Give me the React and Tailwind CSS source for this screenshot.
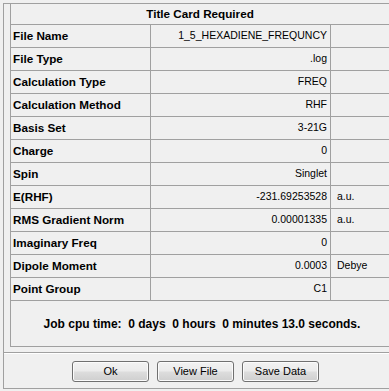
const rows = [
  ["File Name", "1_5_HEXADIENE_FREQUNCY", ""],
  ["File Type", ".log", ""],
  ["Calculation Type", "FREQ", ""],
  ["Calculation Method", "RHF", ""],
  ["Basis Set", "3-21G", ""],
  ["Charge", "0", ""],
  ["Spin", "Singlet", ""],
  ["E(RHF)", "-231.69253528", "a.u."],
  ["RMS Gradient Norm", "0.00001335", "a.u."],
  ["Imaginary Freq", "0", ""],
  ["Dipole Moment", "0.0003", "Debye"],
  ["Point Group", "C1", ""],
];

function Btn({ children }) {
  return (
    <div className="w-[77px] h-[21px] border border-[#707070] rounded-[3px] bg-[linear-gradient(to_bottom,#f2f2f2_0%,#ebebeb_48%,#dddddd_52%,#cfcfcf_100%)] shadow-[inset_0_0_0_1px_#fbfbfb] flex items-center justify-center text-[11px] text-black">
      {children}
    </div>
  );
}

export default function App() {
  return (
    <div
      className="w-[389px] h-[391px] bg-[#f0f0f0] overflow-hidden pt-[3px] pl-[3px] text-black"
      style={{ fontFamily: '"Liberation Sans", Arial, sans-serif' }}
    >
      <div className="h-[386px] border-l border-t border-b border-[#a0a0a0] flex flex-col">
        <div className="ml-[6px] h-[343px] border-l border-b border-[#a0a0a0] flex flex-col">
          <div className="h-[21px] shrink-0 border-b border-[#a0a0a0] flex items-center justify-center font-bold text-[11.7px]">
            Title Card Required
          </div>
          {rows.map(([l, v, u]) => (
            <div
              key={l}
              className="h-[23px] shrink-0 border-b border-[#a0a0a0] grid grid-cols-[140px_180px_1fr]"
            >
              <div className="border-r border-[#a0a0a0] flex items-center pl-[2px] font-bold text-[11.7px] whitespace-nowrap">
                {l}
              </div>
              <div className="border-r border-[#a0a0a0] flex items-center justify-end pr-[3px] text-[10.5px] whitespace-nowrap">
                {v}
              </div>
              <div className="flex items-center pl-[6px] text-[10.5px] whitespace-nowrap">
                {u}
              </div>
            </div>
          ))}
          <div className="flex-1 flex items-center justify-center pl-[4px] font-bold text-[12px] whitespace-pre">
            {"Job cpu time:  0 days  0 hours  0 minutes 13.0 seconds."}
          </div>
        </div>
        <div className="mt-[5px] h-[2px] border-t border-[#a0a0a0] border-b border-b-white shrink-0" />
        <div className="mt-[7px] pl-[68px] flex gap-[8px]">
          <Btn>Ok</Btn>
          <Btn>View File</Btn>
          <Btn>Save Data</Btn>
        </div>
      </div>
    </div>
  );
}
